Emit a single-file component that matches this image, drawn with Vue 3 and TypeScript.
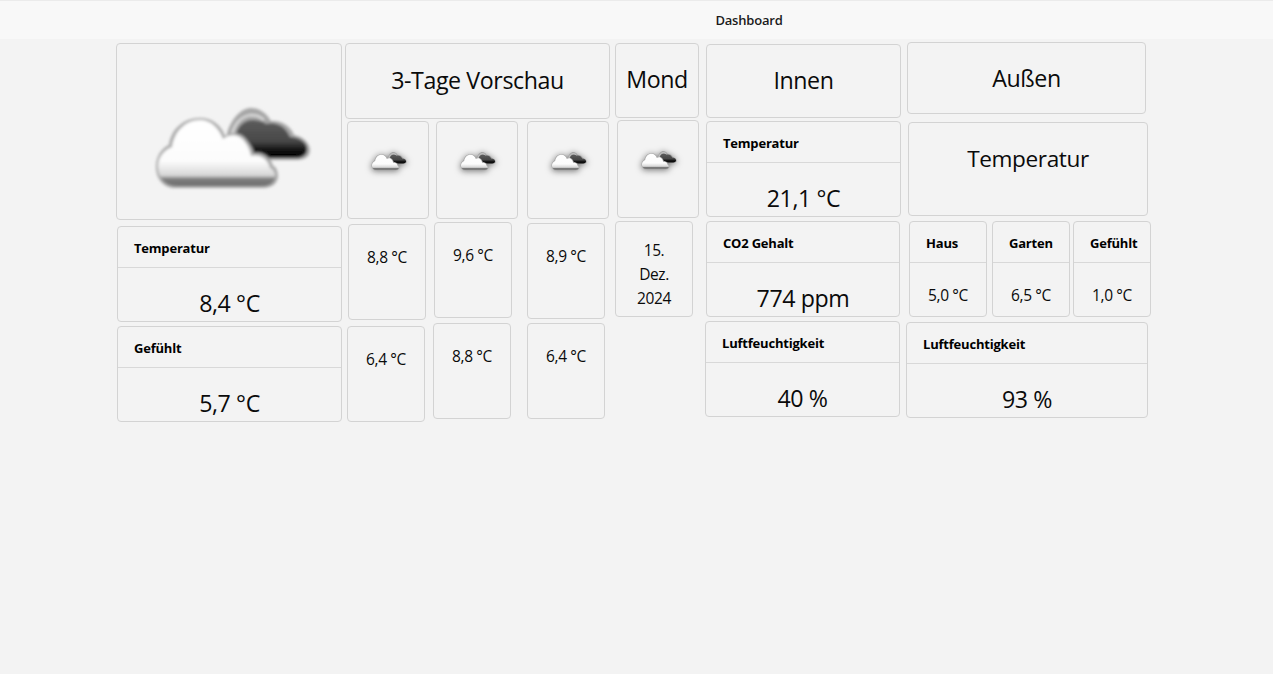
<script setup lang="ts">
// Kacheln pro Spalte, Position und Größe stehen im CSS unter tile-<id>
type Tile = {
  id: string
  kind: 'heading' | 'icon' | 'stat' | 'statSmall' | 'value' | 'date'
  title?: string
  value?: string
}

const col1: Tile[] = [
  { id: 'now', kind: 'icon' },
  { id: 'temp', kind: 'stat', title: 'Temperatur', value: '8,4 °C' },
  { id: 'felt', kind: 'stat', title: 'Gefühlt', value: '5,7 °C' },
]

const forecast: Tile[][] = [
  [
    { id: 'd1', kind: 'icon' },
    { id: 'd1a', kind: 'value', value: '8,8 °C' },
    { id: 'd1b', kind: 'value', value: '6,4 °C' },
  ],
  [
    { id: 'd2', kind: 'icon' },
    { id: 'd2a', kind: 'value', value: '9,6 °C' },
    { id: 'd2b', kind: 'value', value: '8,8 °C' },
  ],
  [
    { id: 'd3', kind: 'icon' },
    { id: 'd3a', kind: 'value', value: '8,9 °C' },
    { id: 'd3b', kind: 'value', value: '6,4 °C' },
  ],
]

const moon: Tile[] = [
  { id: 'moon', kind: 'heading', title: 'Mond' },
  { id: 'moonIcon', kind: 'icon' },
  { id: 'moonDate', kind: 'date' },
]

const inside: Tile[] = [
  { id: 'in', kind: 'heading', title: 'Innen' },
  { id: 'inTemp', kind: 'stat', title: 'Temperatur', value: '21,1 °C' },
  { id: 'inCo2', kind: 'stat', title: 'CO2 Gehalt', value: '774 ppm' },
  { id: 'inHum', kind: 'stat', title: 'Luftfeuchtigkeit', value: '40 %' },
]

const outsideTop: Tile[] = [
  { id: 'out', kind: 'heading', title: 'Außen' },
  { id: 'outTemp', kind: 'heading', title: 'Temperatur' },
]

const outsideTrio: Tile[] = [
  { id: 'house', kind: 'statSmall', title: 'Haus', value: '5,0 °C' },
  { id: 'garden', kind: 'statSmall', title: 'Garten', value: '6,5 °C' },
  { id: 'feel', kind: 'statSmall', title: 'Gefühlt', value: '1,0 °C' },
]

const outsideHum: Tile = { id: 'outHum', kind: 'stat', title: 'Luftfeuchtigkeit', value: '93 %' }

const columns = { col1, forecast, moon, inside, outsideTop, outsideTrio, outsideHum }
</script>

<template>
  <!-- Wolken-Symbol, wird per <use> wiederverwendet -->
  <svg class="sprite" width="0" height="0" aria-hidden="true">
    <defs>
      <linearGradient id="white-cloud" x1="0" y1="0" x2="0" y2="1">
        <stop offset="0" stop-color="#ffffff" />
        <stop offset="0.62" stop-color="#fcfcfc" />
        <stop offset="0.84" stop-color="#d6d6d6" />
        <stop offset="0.89" stop-color="#7e7e7e" />
        <stop offset="1" stop-color="#6c6c6c" />
      </linearGradient>
      <linearGradient id="dark-cloud" x1="0" y1="0" x2="0" y2="1">
        <stop offset="0" stop-color="#5c5c5c" />
        <stop offset="0.55" stop-color="#484848" />
        <stop offset="0.85" stop-color="#0a0a0a" />
        <stop offset="1" stop-color="#000000" />
      </linearGradient>
      <filter id="soft" x="-10%" y="-10%" width="120%" height="120%">
        <feGaussianBlur stdDeviation="1.5" />
      </filter>
      <symbol id="cloud" viewBox="0 0 175 95">
        <g filter="url(#soft)">
          <path
            d="M82 34 C86 18 97 8 106 8 C115 8 122 14 126 21 C136 20 146 26 149 35 C159 37 165 44 165 50 C165 58 158 60 150 60 L116 60 L90 50 Z"
            fill="#a6a6a6"
          />
          <path
            d="M91 36 C92 26 99 21 106 20 C112 20 118 21 121 24 C130 21 141 26 145 37 C154 37 162 42 162 49 C162 55 157 58 150 58 L122 58 L98 48 Z"
            fill="url(#dark-cloud)"
          />
          <path d="M87 34 C90 23 97 16 106 15 C112 15 116 17 119 20" fill="none" stroke="#e2e2e2" stroke-width="2.2" />
          <path
            d="M30 88 C18 88 11 78 11 67 C11 56 17 48 24 45 C26 30 38 18 55 18 C67 18 76 25 80 36 C86 31 97 32 102 40 C105 44 108 48 109 53 C117 51 126 57 128 66 C131 66 133 72 133 76 C133 83 127 88 118 88 Z"
            fill="#a8a8a8"
          />
          <path
            d="M31 86 C20 86 13 77 13 67 C13 57 19 50 27 47 C29 32 40 20 55 20 C66 20 74 28 78 39 C85 33 95 34 100 42 C103 46 105 50 106 56 C115 54 123 59 125 68 C128 69 130 72 130 76 C130 82 125 86 118 86 Z"
            fill="url(#white-cloud)"
          />
        </g>
      </symbol>
    </defs>
  </svg>

  <header class="topbar">Dashboard</header>

  <main class="board">
    <section class="col col-now">
      <template v-for="t in columns.col1" :key="t.id">
        <div v-if="t.kind === 'icon'" class="tile icon-tile" :class="`tile-${t.id}`">
          <svg class="cloud-big"><use href="#cloud" /></svg>
        </div>
        <div v-else class="tile stat" :class="`tile-${t.id}`">
          <div class="stat-title">{{ t.title }}</div>
          <div class="stat-value">{{ t.value }}</div>
        </div>
      </template>
    </section>

    <section class="col col-forecast">
      <div class="tile heading tile-forecast">3-Tage Vorschau</div>
      <div class="forecast-row">
        <div v-for="(day, i) in columns.forecast" :key="i" class="col" :class="`col-day${i + 1}`">
          <template v-for="t in day" :key="t.id">
            <div v-if="t.kind === 'icon'" class="tile icon-tile" :class="`tile-${t.id}`">
              <svg class="cloud-small"><use href="#cloud" /></svg>
            </div>
            <div v-else class="tile value" :class="`tile-${t.id}`">{{ t.value }}</div>
          </template>
        </div>
      </div>
    </section>

    <section class="col col-moon">
      <template v-for="t in columns.moon" :key="t.id">
        <div v-if="t.kind === 'heading'" class="tile heading" :class="`tile-${t.id}`">{{ t.title }}</div>
        <div v-else-if="t.kind === 'icon'" class="tile icon-tile" :class="`tile-${t.id}`">
          <svg class="cloud-small"><use href="#cloud" /></svg>
        </div>
        <div v-else class="tile date" :class="`tile-${t.id}`">15.<br />Dez.<br />2024</div>
      </template>
    </section>

    <section class="col col-inside">
      <template v-for="t in columns.inside" :key="t.id">
        <div v-if="t.kind === 'heading'" class="tile heading" :class="`tile-${t.id}`">{{ t.title }}</div>
        <div v-else class="tile stat" :class="`tile-${t.id}`">
          <div class="stat-title">{{ t.title }}</div>
          <div class="stat-value">{{ t.value }}</div>
        </div>
      </template>
    </section>

    <section class="col col-outside">
      <div v-for="t in columns.outsideTop" :key="t.id" class="tile heading" :class="`tile-${t.id}`">
        {{ t.title }}
      </div>
      <div class="trio">
        <div v-for="t in columns.outsideTrio" :key="t.id" class="tile stat small" :class="`tile-${t.id}`">
          <div class="stat-title">{{ t.title }}</div>
          <div class="stat-value">{{ t.value }}</div>
        </div>
      </div>
      <div class="tile stat" :class="`tile-${columns.outsideHum.id}`">
        <div class="stat-title">{{ columns.outsideHum.title }}</div>
        <div class="stat-value">{{ columns.outsideHum.value }}</div>
      </div>
    </section>
  </main>
</template>

<style>
html,
body {
  margin: 0;
  background: #f3f3f3;
}
</style>

<style scoped>
.sprite {
  display: block;
  width: 0;
  height: 0;
}

/* ==================== Kopfzeile ==================== */
.topbar {
  box-sizing: content-box;
  height: 38px;
  padding-left: 225px;
  border-top: 1px solid #ebebeb;
  background: #f8f8f8;
  font: 600 13px/38px "Open Sans", sans-serif;
  letter-spacing: -0.2px;
  color: #1b1b1b;
  text-align: center;
}

/* ==================== Raster ==================== */
.board {
  display: flex;
  padding-left: 116px;
  min-height: 635px;
  font-family: "Open Sans", sans-serif;
  letter-spacing: -0.4px;
  color: #0a0a0a;
}

.col {
  display: flex;
  flex-direction: column;
  flex: none;
  align-items: flex-start;
}

.col-now { width: 229px; }
.col-forecast { width: 270px; }
.col-moon { width: 90px; }
.col-inside { width: 201px; }
.col-outside { width: 250px; }
.col-day1 { width: 89px; }
.col-day2 { width: 93px; }
.col-day3 { width: 88px; }

.forecast-row,
.trio {
  display: flex;
}

/* ==================== Kachel ==================== */
.tile {
  flex: none;
  box-sizing: border-box;
  border: 1px solid #d3d3d3;
  border-radius: 4px;
  overflow: hidden;
}

.heading {
  display: flex;
  align-items: center;
  justify-content: center;
  padding-bottom: 3px;
  font-size: 23.2px;
}

.icon-tile {
  display: flex;
  justify-content: center;
}

.cloud-big {
  width: 175px;
  height: 95px;
  margin: 56px 0 0 6px;
}

.cloud-small {
  width: 40px;
  height: 22px;
  margin: 28px 0 0 1px;
  filter: drop-shadow(0 1px 3px rgba(0, 0, 0, 0.5));
}

.stat-title {
  box-sizing: border-box;
  height: 41px;
  padding: 1px 16px 0;
  border-bottom: 1px solid #d8d8d8;
  font-size: 13px;
  font-weight: 700;
  line-height: 40px;
  letter-spacing: -0.2px;
  color: #000;
  white-space: nowrap;
}

.stat-value {
  margin-top: 19px;
  font-size: 23.2px;
  line-height: 32px;
  text-align: center;
}

.small .stat-value {
  margin-top: 20px;
  font-size: 15.5px;
  line-height: 24px;
}

.value,
.date {
  font-size: 15.5px;
  line-height: 24px;
  text-align: center;
}

.value { padding-top: 20px; }
.date { padding-top: 16px; }

/* ==================== Kachel-Positionen ==================== */
.tile-now { width: 226px; height: 177px; margin-top: 4px; }
.tile-temp { width: 225px; height: 96px; margin: 6px 0 0 1px; }
.tile-felt { width: 225px; height: 96px; margin: 4px 0 0 1px; }

.tile-forecast { width: 265px; height: 76px; margin-top: 4px; }
.tile-d1 { width: 82px; height: 98px; margin: 2px 0 0 2px; }
.tile-d1a { width: 78px; height: 96px; margin: 5px 0 0 3px; }
.tile-d1b { width: 78px; height: 96px; margin: 6px 0 0 2px; }
.tile-d2 { width: 82px; height: 98px; margin: 2px 0 0 2px; }
.tile-d2a { width: 78px; height: 96px; margin-top: 3px; }
.tile-d2b { width: 78px; height: 96px; margin: 5px 0 0 -1px; }
.tile-d3 { width: 82px; height: 98px; margin-top: 2px; }
.tile-d3a { width: 78px; height: 96px; margin-top: 4px; }
.tile-d3b { width: 78px; height: 96px; margin-top: 4px; }

.tile-moon { width: 84px; height: 75px; margin-top: 4px; }
.tile-moonIcon { width: 82px; height: 98px; margin: 2px 0 0 2px; }
.tile-moonDate { width: 78px; height: 96px; margin-top: 3px; }

.tile-in { width: 195px; height: 74px; margin: 5px 0 0 1px; padding-bottom: 2px; }
.tile-inTemp { width: 195px; height: 96px; margin: 3px 0 0 1px; }
.tile-inCo2 { width: 194px; height: 96px; margin: 4px 0 0 1px; }
.tile-inHum { width: 195px; height: 96px; margin-top: 4px; }

.tile-out { width: 239px; height: 72px; margin: 3px 0 0 1px; padding-bottom: 0; }
.tile-outTemp { width: 240px; height: 94px; margin: 8px 0 0 2px; padding-bottom: 21px; font-size: 22.6px; }
.trio { margin-top: 5px; }
.tile-house { width: 78px; height: 96px; margin-left: 3px; }
.tile-garden { width: 78px; height: 96px; margin-left: 5px; }
.tile-feel { width: 78px; height: 96px; margin-left: 3px; }
.tile-outHum { width: 242px; height: 96px; margin-top: 5px; }
</style>
